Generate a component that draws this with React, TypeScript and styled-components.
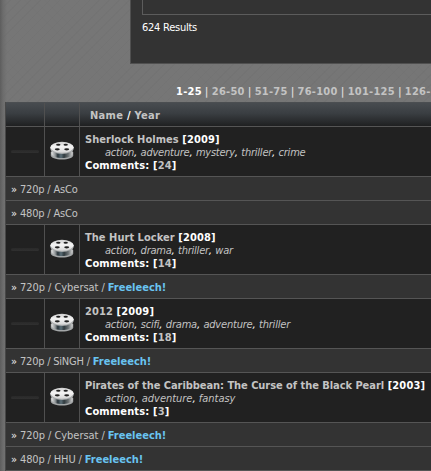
import React from 'react'
import styled, { createGlobalStyle } from 'styled-components'

interface Release {
    name: string;
    gap: number;
    freeleech?: boolean;
}

interface Movie {
    title: string;
    year: string;
    genres: string[];
    comments: number;
    gap: number;
    genreGap: number;
    releases: Release[];
}

const pages = ['1-25', '26-50', '51-75', '76-100', '101-125', '126-'];

const movies: Movie[] = [
    {
        title: 'Sherlock Holmes', year: '2009', comments: 24, gap: 0.03, genreGap: -0.23,
        genres: ['action', 'adventure', 'mystery', 'thriller', 'crime'],
        releases: [{ name: '720p / AsCo', gap: -0.2 }, { name: '480p / AsCo', gap: -0.2 }],
    },
    {
        title: 'The Hurt Locker', year: '2008', comments: 14, gap: 0.03, genreGap: -0.23,
        genres: ['action', 'drama', 'thriller', 'war'],
        releases: [{ name: '720p / Cybersat', gap: -0.05, freeleech: true }],
    },
    {
        title: '2012', year: '2009', comments: 18, gap: 0.1, genreGap: -0.2,
        genres: ['action', 'scifi', 'drama', 'adventure', 'thriller'],
        releases: [{ name: '720p / SiNGH', gap: -0.22, freeleech: true }],
    },
    {
        title: 'Pirates of the Caribbean: The Curse of the Black Pearl', year: '2003', comments: 3, gap: -0.05, genreGap: -0.03,
        genres: ['action', 'adventure', 'fantasy'],
        releases: [
            { name: '720p / Cybersat', gap: -0.05, freeleech: true },
            { name: '480p / HHU', gap: -0.14, freeleech: true },
        ],
    },
];

function FilmReel() {
    return (
        <svg width="24" height="20" viewBox="0 0 24 20">
            <defs>
                <linearGradient id="side" x1="0" x2="1" y1="0" y2="0">
                    <stop offset="0" stopColor="#e4e4e4" />
                    <stop offset="0.18" stopColor="#8f9496" />
                    <stop offset="0.3" stopColor="#273238" />
                    <stop offset="0.45" stopColor="#5d7079" />
                    <stop offset="0.6" stopColor="#303a3e" />
                    <stop offset="0.8" stopColor="#6d7375" />
                    <stop offset="1" stopColor="#d0d0d0" />
                </linearGradient>
                <linearGradient id="disc" x1="0" x2="0" y1="0" y2="1">
                    <stop offset="0" stopColor="#cfcfcf" />
                    <stop offset="0.45" stopColor="#f4f4f4" />
                    <stop offset="1" stopColor="#d6d6d6" />
                </linearGradient>
            </defs>
            <path d="M0.8 11v3.200c0 2.500 4.800 4.300 11.200 4.300s11.200-1.800 11.200-4.300V11z" fill="#a4a7a8" />
            <path d="M1.500 8v5.200c1 2.300 5.400 3.700 10.500 3.700s9.500-1.400 10.500-3.700V8z" fill="url(#side)" />
            <ellipse cx="12" cy="7.200" rx="11.700" ry="5.700" fill="#a9acad" />
            <ellipse cx="12" cy="6.300" rx="11.600" ry="5.500" fill="url(#disc)" />
            <ellipse cx="8.300" cy="3.700" rx="2.200" ry="1" fill="#202020" />
            <ellipse cx="15.700" cy="3.700" rx="2.200" ry="1" fill="#202020" />
            <ellipse cx="7.300" cy="8.300" rx="2.500" ry="1.100" fill="#202020" />
            <ellipse cx="16.700" cy="8.300" rx="2.500" ry="1.100" fill="#202020" />
        </svg>
    )
}

export default function App() {
    return (
        <Page>
            <GlobalStyle />
            <SearchPanel>
                <SearchForm />
                <Results>624 Results</Results>
            </SearchPanel>

            <Pagination>
                {pages.map((range, index) => (
                    <React.Fragment key={range}>
                        {index > 0 && <Divider>|</Divider>}
                        <PageLink $current={index === 0}>{range}</PageLink>
                    </React.Fragment>
                ))}
            </Pagination>

            <Table>
                <HeaderRow>
                    <Cell />
                    <Cell />
                    <HeaderName>Name <b>/</b> Year</HeaderName>
                </HeaderRow>
                {movies.map((movie) => (
                    <React.Fragment key={movie.title}>
                        <MovieRow>
                            <Cell><Dash /></Cell>
                            <IconCell><FilmReel /></IconCell>
                            <Info>
                                <Line>
                                    <Title $gap={movie.gap}>{movie.title}</Title> [{movie.year}]
                                </Line>
                                <Genres $gap={movie.genreGap}>
                                    {movie.genres.map((genre, index) => (
                                        <React.Fragment key={genre}>
                                            {index > 0 && <b>, </b>}
                                            {genre}
                                        </React.Fragment>
                                    ))}
                                </Genres>
                                <Line>Comments: [<Title $gap={0.1}>{movie.comments}</Title>]</Line>
                            </Info>
                        </MovieRow>
                        {movie.releases.map(({ name, gap, freeleech }) => (
                            <ReleaseRow key={name}>
                                <Arrow>»</Arrow>
                                <ReleaseName $gap={gap}>{name}{freeleech && ' /'}</ReleaseName>
                                {freeleech && <Freeleech>Freeleech!</Freeleech>}
                            </ReleaseRow>
                        ))}
                    </React.Fragment>
                ))}
            </Table>
        </Page>
    )
}

const GlobalStyle = createGlobalStyle`
    body {
        margin: 0;
        background: #757575;
        overflow: hidden;
    }
`

const Page = styled.div`
    box-sizing: border-box;
    display: flex;
    flex-direction: column;
    width: 431px;
    height: 471px;
    padding-left: 5px;
    overflow: hidden;
    white-space: nowrap;
    color: #fff;
    font: 11px/13px "DejaVu Sans Condensed", "DejaVu Sans", sans-serif;
    font-stretch: condensed;
    background:
        linear-gradient(90deg, #5d5d5d, rgba(104, 104, 104, 0.7) 3px, transparent 7px),
        repeating-linear-gradient(135deg, rgba(0, 0, 0, 0.025) 0 1px, transparent 1px 7px),
        repeating-linear-gradient(45deg, rgba(0, 0, 0, 0.01) 0 1px, transparent 1px 7px),
        #767676;
`

const SearchPanel = styled.div`
    box-sizing: border-box;
    flex: none;
    height: 64px;
    margin-left: 125px;
    padding-left: 11px;
    background: #333;
    border-left: 1px solid #505050;
    border-bottom: 1px solid #505050;
`

const SearchForm = styled.div`
    box-sizing: border-box;
    height: 15px;
    border-left: 1px solid #5c5c5c;
    border-bottom: 1px solid #5c5c5c;
`

const Results = styled.div`
    padding-top: 6px;
    letter-spacing: -0.25px;
`

const Pagination = styled.div`
    flex: none;
    display: flex;
    height: 17px;
    margin-top: 21px;
    padding-left: 171px;
    font-weight: bold;
    letter-spacing: 0.25px;
`

const PageLink = styled.span<{ $current: boolean }>`
    flex: none;
    color: ${props => props.$current ? '#fff' : '#c3c3c3'};
`

const Divider = styled.span`
    flex: none;
    width: 10px;
    text-align: center;
    color: #d8d8d8;
`

const Table = styled.div`
    flex: none;
    border-left: 1px solid #484848;
`

const Row = styled.div`
    box-sizing: border-box;
    display: grid;
    grid-template-columns: 39px 35px 1fr;
    border-bottom: 1px solid #555;
`

const HeaderRow = styled(Row)`
    height: 25px;
    border-top: 1px solid #4b4e51;
    background: linear-gradient(#484c50, #3a3e42 45%, #1f2021);
`

const HeaderName = styled.div`
    padding: 6px 0 0 10px;
    font-weight: bold;
    letter-spacing: 0.3px;
    color: #c3c3c3;

    b {
        color: #fff;
    }
`

const MovieRow = styled(Row)`
    height: 50px;
    background: #212121;
`

const Cell = styled.div`
    display: flex;
    align-items: center;
    justify-content: center;
    border-right: 1px solid #505050;
`

const IconCell = styled(Cell)`
    padding-bottom: 1px;
`

const Dash = styled.div`
    width: 28px;
    height: 3px;
    border-radius: 2px;
    background: linear-gradient(#292929, #303030);
`

const Info = styled.div`
    padding: 6px 0 0 5px;
`

const Line = styled.div`
    font-weight: bold;
    letter-spacing: 0.15px;
`

const Title = styled.span<{ $gap: number }>`
    letter-spacing: ${props => props.$gap}px;
    color: #c3c3c3;
`

const Genres = styled.div<{ $gap: number }>`
    padding-left: 20px;
    font-style: italic;
    color: #c3c3c3;
    letter-spacing: ${props => props.$gap}px;

    b {
        font-weight: normal;
        letter-spacing: 0.1px;
        color: #fff;
    }
`

const ReleaseRow = styled.div`
    box-sizing: border-box;
    display: flex;
    height: 24px;
    padding: 6px 0 0 5px;
    background: #333;
    border-bottom: 1px solid #555;
    color: #c3c3c3;
`

const Arrow = styled.span`
    width: 9px;
    color: #eee;
`

const ReleaseName = styled.span<{ $gap: number }>`
    letter-spacing: ${props => props.$gap}px;
`

const Freeleech = styled.span`
    margin-left: 3px;
    font-weight: bold;
    color: #69c4f1;
`
